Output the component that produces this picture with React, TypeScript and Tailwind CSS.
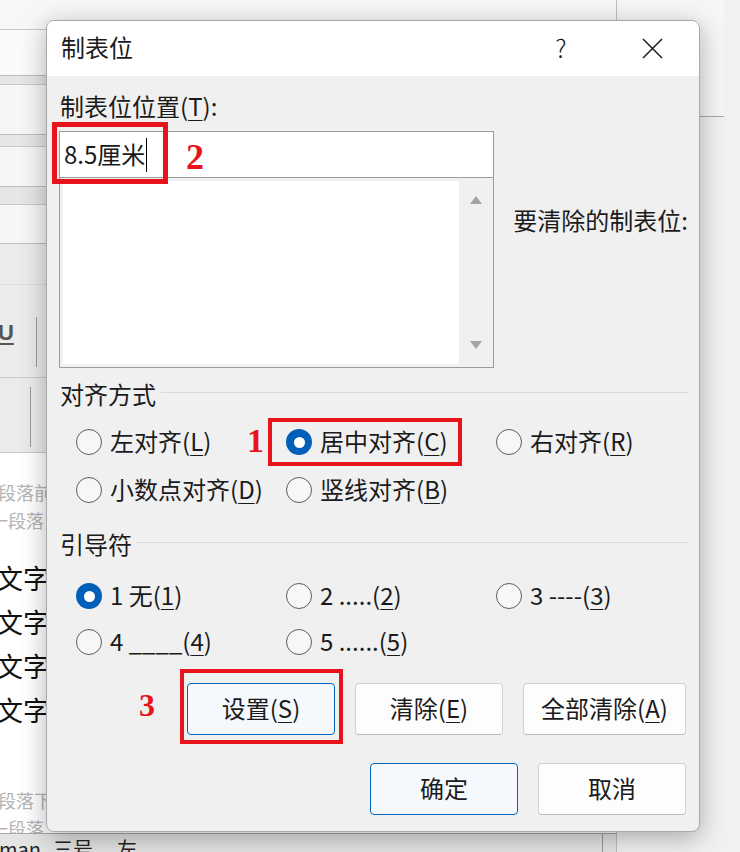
import React from 'react';

const Key: React.FC<{ c: string }> = ({ c }) => (
  <span className="underline decoration-1 underline-offset-[4px]">{c}</span>
);

const Radio: React.FC<{ checked?: boolean; children: React.ReactNode }> = ({ checked, children }) => (
  <div className="flex items-center gap-[8px] h-[30px]">
    {checked ? (
      <span className="w-[26px] h-[26px] shrink-0 rounded-full bg-[#005fb8] flex items-center justify-center">
        <span className="w-[11px] h-[11px] rounded-full bg-white"></span>
      </span>
    ) : (
      <span className="w-[26px] h-[26px] shrink-0 rounded-full border-[1.5px] border-[#5c5c5c] bg-[#f7f7f7]"></span>
    )}
    <span className="whitespace-nowrap mt-[-2px]">{children}</span>
  </div>
);

const GroupTitle: React.FC<{ title: string }> = ({ title }) => (
  <div className="flex items-center h-[30px] gap-[5px]">
    <span className="mt-[-2px]">{title}</span>
    <div className="flex-1 h-px bg-[#dadada] mt-[-5px]"></div>
  </div>
);

const Button: React.FC<{ w: string; primary?: boolean; children: React.ReactNode }> = ({ w, primary, children }) => (
  <div
    className={`${w} h-[52px] rounded-[4px] border flex items-center justify-center pb-[2px] ${
      primary ? 'border-[#0067c0] bg-[#f5f9fd]' : 'border-[#d0d0d0] border-b-[#bcbcbc] bg-[#fdfdfd]'
    }`}
  >
    {children}
  </div>
);

const Mark: React.FC<{ n: string; className: string }> = ({ n, className }) => (
  <span className={`absolute font-['Liberation_Serif',serif] font-bold text-[#e8141c] leading-none ${className}`}>{n}</span>
);

const Background: React.FC = () => (
  <div className="flex h-full">
    <div className="w-[617px] flex flex-col border-r border-[#bdbdbd] bg-[#f4f4f4]">
      <div className="h-[30px] border-b border-[#c9c9c9] bg-[#f7f7f7]"></div>
      <div className="h-[46px] border-b border-[#bdbdbd] bg-[#fafafa]"></div>
      <div className="h-[9px] border-b border-[#c9c9c9] bg-[#e6e6e6]"></div>
      <div className="h-[50px] border-b border-[#bdbdbd] bg-[#f6f6f6]"></div>
      <div className="h-[12px] border-b border-[#c9c9c9] bg-[#e6e6e6]"></div>
      <div className="h-[40px] border-b border-[#bdbdbd] bg-[#f6f6f6]"></div>
      <div className="h-[18px] border-b border-[#c9c9c9] bg-[#e6e6e6]"></div>
      <div className="h-[39px] border-b border-[#bdbdbd] bg-[#f6f6f6]"></div>
      <div className="h-[41px] border-b border-[#dcdcdc] bg-[#ebebeb]"></div>
      <div className="h-[93px] border-b border-[#c9c9c9] bg-[#ebebeb] flex items-start overflow-hidden">
        <span className="mt-[37px] ml-[-2px] text-[22px] font-semibold leading-none text-[#555] underline decoration-2 underline-offset-[3px] font-['Liberation_Sans',sans-serif]">
          U
        </span>
        <div className="ml-[22px] mt-[32px] w-px h-[50px] bg-[#9a9a9a]"></div>
      </div>
      <div className="h-[75px] border-b border-[#c9c9c9] bg-[#ebebeb] pl-[30px] pt-[9px]">
        <div className="w-px h-[60px] bg-[#9a9a9a]"></div>
      </div>
      <div className="flex-1 bg-white overflow-hidden pt-[25px] font-['Noto_Sans_CJK_SC',sans-serif]">
        <div className="text-[18px] leading-[28px] text-[#b4b4b4] ml-[-2px] whitespace-nowrap">段落前</div>
        <div className="text-[18px] leading-[28px] text-[#b4b4b4] ml-[-10px] whitespace-nowrap">一段落</div>
        <div className="mt-[22px] text-[27px] leading-[44px] text-[#111] ml-[-4px]">
          <div>文字</div>
          <div>文字</div>
          <div>文字</div>
          <div>文字</div>
        </div>
        <div className="mt-[54px] text-[18px] leading-[28px] text-[#b4b4b4] ml-[-2px] whitespace-nowrap">段落下</div>
        <div className="text-[18px] leading-[28px] text-[#b4b4b4] ml-[-10px] whitespace-nowrap">一段落</div>
      </div>
      <div className="h-[19px] border-t border-[#a8a8a8] bg-[#e4e4e4] flex overflow-hidden font-['Noto_Sans_CJK_SC',sans-serif] text-[20px] leading-[30px] text-[#222] whitespace-nowrap">
        <span className="ml-[-1px]">man</span>
        <span className="ml-[12px]">三号</span>
        <span className="ml-[24px]">左</span>
        <div className="ml-auto mr-[13px] w-px h-full bg-[#9a9a9a]"></div>
      </div>
    </div>
    <div className="flex-1 flex flex-col bg-[#f1f1f1]">
      <div className="w-[107px] h-[117px] border-b border-[#a8a8a8] bg-[#f6f6f6]"></div>
      <div className="flex-1"></div>
    </div>
  </div>
);

export default function App() {
  return (
    <div className="relative w-[740px] h-[852px] overflow-hidden bg-[#f1f1f1]">
      <Background />

      <div className="absolute left-[46px] top-[20px] w-[654px] h-[812px] flex flex-col rounded-[8px] border border-[#a9a9a9] bg-[#f0f0f0] overflow-hidden shadow-[0_6px_26px_rgba(0,0,0,0.3)] font-['Noto_Sans_CJK_SC',sans-serif] text-[24px] leading-[30px] text-[#1b1b1b]">
        <div className="h-[55px] shrink-0 bg-white flex items-center pl-[14px]">
          <span className="mb-[4px]">制表位</span>
          <div className="ml-auto flex">
            <div className="w-[92px] h-[55px] flex items-center justify-center text-[25px] font-light pb-[3px]">?</div>
            <div className="w-[92px] h-[55px] flex items-center justify-center pr-[1px] pb-[1px]">
              <svg width="21" height="21" viewBox="0 0 21 21">
                <path d="M1 1L20 20M20 1L1 20" stroke="#1b1b1b" strokeWidth="1.5" fill="none" />
              </svg>
            </div>
          </div>
        </div>

        <div className="flex-1 flex flex-col pl-[13px] pr-[11px] pt-[15px]">
          <div className="h-[30px]">
            制表位位置(<Key c="T" />):
          </div>

          <div className="mt-[10px] flex">
            <div className="w-[437px] ml-[-1px] flex flex-col">
              <div className="relative h-[47px] border border-[#9c9c9c] bg-white flex items-center pl-[4px]">
                <span className="mt-[-2px]">8.5厘米</span>
                <span className="w-px h-[34px] bg-black ml-[1px]"></span>
                <div className="absolute left-[-8px] top-[-10px] w-[116px] h-[62px] border-[5px] border-[#e8141c]"></div>
                <Mark n="2" className="left-[126px] top-[7px] text-[36px]" />
              </div>
              <div className="h-[190px] border border-t-0 border-[#9c9c9c] bg-[#f0f0f0] flex pl-[3px] py-[3px]">
                <div className="flex-1 bg-white"></div>
                <div className="w-[34px] flex flex-col items-center justify-between py-[15px]">
                  <svg width="12" height="8" viewBox="0 0 12 8">
                    <path d="M6 0L12 8H0Z" fill="#a3a3a3" />
                  </svg>
                  <svg width="12" height="8" viewBox="0 0 12 8">
                    <path d="M0 0H12L6 8Z" fill="#a3a3a3" />
                  </svg>
                </div>
              </div>
            </div>
            <div className="pl-[19px] pt-[74px] whitespace-nowrap">要清除的制表位:</div>
          </div>

          <div className="mt-[12px]">
            <GroupTitle title="对齐方式" />
          </div>
          <div className="mt-[17px] pl-[16px] grid grid-cols-[210px_210px_1fr] gap-y-[18px]">
            <Radio>
              左对齐(<Key c="L" />)
            </Radio>
            <div className="relative">
              <Radio checked>
                居中对齐(<Key c="C" />)
              </Radio>
              <div className="absolute left-[-18px] top-[-9px] w-[194px] h-[48px] border-[4px] border-[#e8141c]"></div>
              <Mark n="1" className="left-[-39px] top-[-3px] text-[34px]" />
            </div>
            <Radio>
              右对齐(<Key c="R" />)
            </Radio>
            <Radio>
              小数点对齐(<Key c="D" />)
            </Radio>
            <Radio>
              竖线对齐(<Key c="B" />)
            </Radio>
          </div>

          <div className="mt-[25px]">
            <GroupTitle title="引导符" />
          </div>
          <div className="mt-[21px] pl-[16px] grid grid-cols-[210px_210px_1fr] gap-y-[16px]">
            <Radio checked>
              1 无(<Key c="1" />)
            </Radio>
            <Radio>
              2 .....(<Key c="2" />)
            </Radio>
            <Radio>
              3 ----(<Key c="3" />)
            </Radio>
            <Radio>
              4 ____(<Key c="4" />)
            </Radio>
            <Radio>
              5 ......(<Key c="5" />)
            </Radio>
          </div>

          <div className="mt-[26px] flex justify-end gap-[20px] pr-[2px]">
            <div className="relative">
              <Button w="w-[148px]" primary>
                设置(<Key c="S" />)
              </Button>
              <div className="absolute left-[-7px] top-[-14px] w-[163px] h-[75px] border-[4px] border-[#e8141c]"></div>
              <Mark n="3" className="left-[-48px] top-[6px] text-[32px]" />
            </div>
            <Button w="w-[148px]">
              清除(<Key c="E" />)
            </Button>
            <Button w="w-[163px]">
              全部清除(<Key c="A" />)
            </Button>
          </div>

          <div className="mt-[28px] flex justify-end gap-[20px] pr-[2px]">
            <Button w="w-[148px]" primary>
              确定
            </Button>
            <Button w="w-[148px]">取消</Button>
          </div>
        </div>
      </div>
    </div>
  );
}
